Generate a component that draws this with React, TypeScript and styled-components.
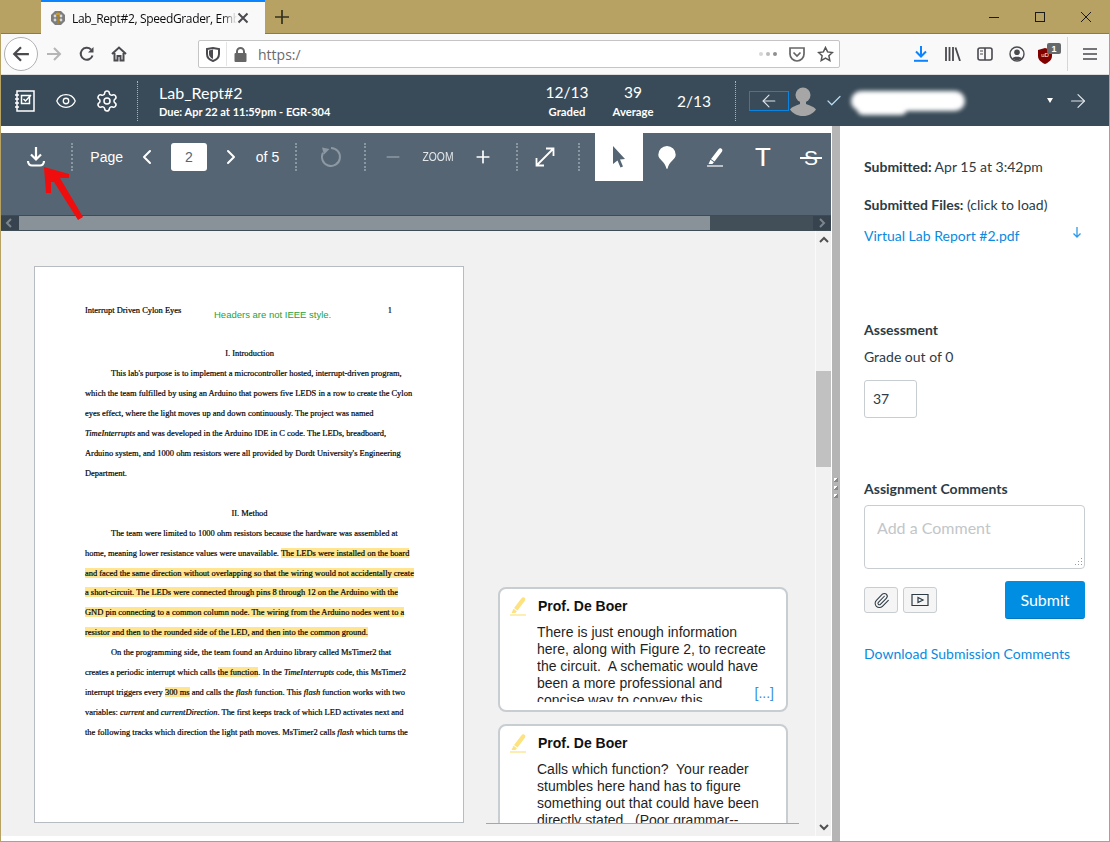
import React from 'react';
import styled, { createGlobalStyle } from 'styled-components';
import { ArrowLeft, ArrowRight, Check, ChevronLeft, ChevronRight, Eye, Minus, Paperclip, Plus, Settings } from 'lucide-react';

const GlobalStyle = createGlobalStyle`
   html, body { margin: 0; padding: 0; background: #fff; }
   * { box-sizing: border-box; }
`;

const Win = styled.div`
   width: 1110px;
   height: 842px;
   overflow: hidden;
   position: relative;
   display: flex;
   flex-direction: column;
   background: #fff;
   border: 1px solid #b8a263;
   border-top: 0;
   font-family: 'Lato', sans-serif;
`;

/* browser chrome */
const TabStrip = styled.div`
   height: 34px;
   flex: none;
   display: flex;
   background: #b8a263;
   border-bottom: 1px solid #8d7a45;
   padding-left: 40px;
`;
const Tab = styled.div`
   width: 224px;
   height: 34px;
   background: #f9f9fa;
   border-top: 2px solid #0a84ff;
   display: flex;
   align-items: center;
   padding-left: 9px;
   font: 12px 'Open Sans', sans-serif;
   letter-spacing: -0.35px;
   color: #0c0c0d;
`;
const TabTitle = styled.span`
   width: 165px;
   margin-left: 6px;
   white-space: nowrap;
   overflow: hidden;
   -webkit-mask-image: linear-gradient(to right, #000 150px, transparent 165px);
   mask-image: linear-gradient(to right, #000 150px, transparent 165px);
`;
const NewTab = styled.div`
   width: 34px;
   height: 33px;
   display: flex;
   align-items: center;
   justify-content: center;
`;
const WinButtons = styled.div`
   margin-left: auto;
   display: flex;
   height: 33px;
`;
const WinButton = styled.div`
   width: 46px;
   display: flex;
   align-items: center;
   justify-content: center;
`;
const NavBar = styled.div`
   height: 41px;
   flex: none;
   display: flex;
   align-items: center;
   background: #f9f9fa;
   border-bottom: 1px solid #dcdcdc;
   padding-left: 3px;
`;
const BackCircle = styled.div`
   width: 34px;
   height: 34px;
   border-radius: 50%;
   background: #fff;
   border: 1px solid #b1b1b3;
   display: flex;
   align-items: center;
   justify-content: center;
`;
const NavSlot = styled.div<{ $w?: number; $ml?: number }>`
   width: ${p => p.$w ?? 32}px;
   height: 32px;
   flex: none;
   margin-left: ${p => p.$ml ?? 0}px;
   display: flex;
   align-items: center;
   justify-content: center;
`;
const UrlBar = styled.div`
   width: 642px;
   height: 28px;
   margin: 0 65px 0 63px;
   flex: none;
   display: flex;
   align-items: center;
   background: #fff;
   border: 1px solid #c5c5c6;
   border-radius: 2px;
   padding-left: 7px;
   font: 14px 'Open Sans', sans-serif;
   color: #6b6b6b;
`;
const UrlSep = styled.div`
   width: 1px;
   height: 24px;
   background: #e4e4e4;
   margin: 0 7px 0 6px;
`;
const UrlText = styled.span`
   margin-left: 11px;
   flex: 1;
`;
const ToolbarSep = styled.div`
   width: 1px;
   height: 34px;
   background: #d6d6d7;
   margin: 0 5px 0 2px;
`;

/* speedgrader header */
const Header = styled.div`
   height: 51px;
   flex: none;
   display: flex;
   align-items: center;
   background: #394b58;
   color: #fff;
   padding-left: 4px;
`;
const HeadIcon = styled.div<{ $w: number; $ml?: number }>`
   width: ${p => p.$w}px;
   margin-left: ${p => p.$ml ?? 0}px;
   flex: none;
   display: flex;
   align-items: center;
   justify-content: center;
`;
const HeadDivider = styled.div<{ $l: number }>`
   height: 40px;
   flex: none;
   margin-left: ${p => p.$l}px;
   border-left: 1px dotted #a9b3ba;
`;
const TitleBlock = styled.div`
   width: 378px;
   margin-left: 21px;
   flex: none;
`;
const AssignmentTitle = styled.div`
   font-size: 16px;
   line-height: 21px;
`;
const DueLine = styled.div`
   font-size: 11px;
   font-weight: 700;
   line-height: 16px;
   margin-top: 1px;
`;
const Stat = styled.div<{ $w: number }>`
   width: ${p => p.$w}px;
   flex: none;
   text-align: center;
`;
const StatValue = styled.div`
   font-size: 15.5px;
   line-height: 20px;
`;
const StatLabel = styled.div`
   font-size: 11.3px;
   font-weight: 700;
   line-height: 16px;
   margin-top: 2px;
`;
const PrevStudent = styled.div`
   width: 40px;
   height: 20px;
   margin-left: 13px;
   flex: none;
   border: 1px solid #0a84e0;
   display: flex;
   align-items: center;
   justify-content: center;
`;
const Avatar = styled.svg`
   flex: none;
`;
const NameSmudge = styled.div`
   width: 114px;
   height: 20px;
   flex: none;
   background: #fff;
   border-radius: 10px;
   filter: blur(2px);
   position: relative;
   &::after {
      content: '';
      position: absolute;
      left: 6px;
      top: 12px;
      width: 50px;
      height: 12px;
      border-radius: 6px;
      background: #fff;
   }
`;
const Caret = styled.div`
   width: 0;
   height: 0;
   margin-left: 82px;
   flex: none;
   border-left: 3.5px solid transparent;
   border-right: 3.5px solid transparent;
   border-top: 5px solid #fff;
`;

/* main area */
const Body = styled.div`
   flex: 1;
   min-height: 0;
   display: flex;
`;
const Viewer = styled.div`
   width: 830px;
   flex: none;
   padding-top: 7px;
   display: flex;
   flex-direction: column;
`;
const Toolbar = styled.div`
   height: 82px;
   flex: none;
   background: #566573;
   display: flex;
   align-items: flex-start;
   overflow: hidden;
   color: #fff;
   font-family: 'Liberation Sans', sans-serif;
   font-size: 14px;
`;
const TbItem = styled.div<{ $w: number; $ml?: number; $mr?: number; $end?: boolean }>`
   width: ${p => p.$w}px;
   height: 48px;
   flex: none;
   margin-left: ${p => p.$ml ?? 0}px;
   margin-right: ${p => p.$mr ?? 0}px;
   padding-right: ${p => (p.$end ? 12 : 0)}px;
   display: flex;
   align-items: center;
   justify-content: ${p => (p.$end ? 'flex-end' : 'center')};
`;
const TbDivider = styled.div`
   width: 2px;
   height: 28px;
   margin-top: 10px;
   flex: none;
   border-left: 2px dotted #8a96a0;
`;
const PageInput = styled.div`
   width: 36px;
   height: 28px;
   margin: 10px 0 0 12px;
   flex: none;
   background: #fff;
   border-radius: 3px;
   color: #566573;
   font-size: 14px;
   display: flex;
   align-items: center;
   justify-content: center;
`;
const ZoomLabel = styled.span`
   font-size: 12px;
   transform: scaleX(0.86);
   color: #e4e8eb;
`;
const Tool = styled.div<{ $on?: boolean; $ml?: number }>`
   width: 48px;
   height: 48px;
   flex: none;
   margin-left: ${p => p.$ml ?? 0}px;
   display: flex;
   align-items: center;
   justify-content: center;
   background: ${p => (p.$on ? '#fff' : 'transparent')};
`;
const TextTool = styled.span`
   font-family: 'Liberation Mono', monospace;
   font-size: 28px;
   color: #fff;
   line-height: 1;
   padding-top: 4px;
`;
const StrikeTool = styled.span`
   position: relative;
   font-family: 'Liberation Sans', sans-serif;
   font-size: 21px;
   color: #fff;
   line-height: 1;
   &::after {
      content: '';
      position: absolute;
      left: -4px;
      right: -4px;
      top: 10px;
      height: 2px;
      background: #fff;
   }
`;
const HScroll = styled.div`
   height: 16px;
   flex: none;
   display: flex;
   background: #424f59;
   border-top: 1px solid #3f4b55;
   border-bottom: 1px solid #3f4b55;
`;
const HButton = styled.div`
   width: 18px;
   flex: none;
   background: #37444f;
   display: flex;
   align-items: center;
   justify-content: center;
`;
const HThumb = styled.div`
   width: 691px;
   background: #8a9299;
`;
const HTrack = styled.div`
   flex: 1;
`;
const DocRow = styled.div`
   height: 605px;
   flex: none;
   display: flex;
   background: #f1f1f1;
`;
const DocPane = styled.div`
   width: 814px;
   flex: none;
   display: flex;
`;
const PageCol = styled.div`
   padding: 35px 0 0 33px;
   flex: none;
`;
const PaperSheet = styled.div`
   width: 430px;
   height: 557px;
   background: #fff;
   border: 1px solid #b7bcc2;
   padding: 33px 0 0 50px;
   position: relative;
   font-family: 'Liberation Serif', serif;
   font-size: 8.45px;
   color: #000;
   -webkit-text-stroke: 0.2px #000;
`;
const HeadLine = styled.div`
   display: flex;
   width: 307px;
   justify-content: space-between;
   line-height: 20px;
   margin-bottom: 24px;
`;
const Line = styled.div<{ $indent?: boolean; $center?: boolean; $gap?: boolean }>`
   line-height: 19.95px;
   white-space: nowrap;
   padding-left: ${p => (p.$indent ? 26 : 0)}px;
   width: ${p => (p.$center ? '329px' : 'auto')};
   text-align: ${p => (p.$center ? 'center' : 'left')};
   margin-bottom: ${p => (p.$gap ? 20 : 0)}px;
`;
const Hl = styled.span`
   background: #ffe58f;
`;
const GreenNote = styled.div`
   position: absolute;
   left: 179px;
   top: 42px;
   font: 9.5px 'Liberation Sans', sans-serif;
   color: #22a33c;
   -webkit-text-stroke: 0;
`;
const CommentCol = styled.div`
   width: 313px;
   height: 593px;
   margin-left: 22px;
   flex: none;
   padding: 356px 11px 0 12px;
   overflow: hidden;
   border-bottom: 1px solid #a3a7aa;
`;
const Card = styled.div`
   width: 290px;
   height: 125px;
   margin-bottom: 12px;
   flex: none;
   padding: 9px 12px 8px 9px;
   background: #fff;
   border: 2px solid #c7cdd1;
   border-radius: 8px;
   position: relative;
   font-family: 'Liberation Sans', sans-serif;
   color: #1f1f1f;
`;
const CardHead = styled.div`
   display: flex;
   align-items: center;
   height: 16px;
   font-size: 14px;
   font-weight: 700;
   gap: 11px;
   color: #111;
`;
const CardBody = styled.div`
   width: 235px;
   height: 78px;
   margin: 10px 0 0 28px;
   overflow: hidden;
   font-size: 14px;
   line-height: 17px;
   white-space: pre-wrap;
`;
const More = styled.span`
   position: absolute;
   right: 12px;
   bottom: 9px;
   font-size: 14px;
   color: #3a8fdc;
`;
const VScroll = styled.div`
   width: 16px;
   flex: none;
   background: #f1f1f1;
   border-left: 1px solid #fafafa;
   display: flex;
   flex-direction: column;
   align-items: center;
`;
const VButton = styled.div`
   height: 18px;
   width: 15px;
   flex: none;
   display: flex;
   align-items: center;
   justify-content: center;
`;
const VThumb = styled.div`
   width: 15px;
   height: 96px;
   margin-top: 122px;
   background: #c1c1c1;
`;
const VFill = styled.div`
   flex: 1;
`;
const Splitter = styled.div`
   width: 8px;
   flex: none;
   background: #b5b5b5;
   display: flex;
   flex-direction: column;
   align-items: center;
   justify-content: center;
   gap: 4px;
   margin-left: 1px;
   padding-top: 8px;
`;
const Grip = styled.i`
   width: 4px;
   height: 4px;
   background: linear-gradient(135deg, #fff 50%, #8a8a8a 50%);
`;

/* right side panel */
const Side = styled.div`
   flex: 1;
   padding: 31px 23px 0 24px;
   font-size: 14px;
   color: #2d3b45;
   line-height: 20px;
`;
const Strong = styled.b`
   font-weight: 700;
`;
const Row = styled.div<{ $mt?: number }>`
   margin-top: ${p => p.$mt ?? 0}px;
`;
const FileRow = styled.div`
   margin-top: 11px;
   display: flex;
   justify-content: space-between;
   align-items: flex-start;
`;
const DownloadGlyph = styled.svg`
   margin-right: 3px;
`;
const LinkText = styled.span`
   color: #0a8ae0;
`;
const GradeBox = styled.div`
   width: 53px;
   height: 38px;
   margin-top: 13px;
   border: 1px solid #c7cdd1;
   border-radius: 3px;
   padding-left: 8px;
   display: flex;
   align-items: center;
`;
const CommentBox = styled.div`
   width: 221px;
   height: 64px;
   margin-top: 6px;
   border: 1px solid #c7cdd1;
   border-radius: 4px;
   padding: 12px 12px;
   color: #c2c6c9;
   font-size: 16px;
   position: relative;
`;
const ResizeGrip = styled.svg`
   position: absolute;
   right: 1px;
   bottom: 1px;
`;
const ActionRow = styled.div`
   width: 221px;
   margin-top: 12px;
   display: flex;
   align-items: flex-start;
   gap: 5px;
`;
const MediaButton = styled.div`
   width: 34px;
   height: 26px;
   margin-top: 6px;
   background: #f5f5f5;
   border: 1px solid #c7cdd1;
   border-radius: 3px;
   display: flex;
   align-items: center;
   justify-content: center;
`;
const Submit = styled.div`
   width: 80px;
   height: 38px;
   margin-left: auto;
   padding-top: 1px;
   background: #008ee2;
   border-bottom: 1px solid #0077c2;
   border-radius: 3px;
   color: #fff;
   font-size: 16px;
   display: flex;
   align-items: center;
   justify-content: center;
`;
const RedArrow = styled.svg`
   position: absolute;
   left: 29px;
   top: 160px;
`;

const Favicon = () => (
   <svg width="16" height="16" viewBox="0 0 16 16">
      <path d="M5 1h6l4 4v6l-4 4H5l-4-4V5z" fill="#7d7d7d" />
      <circle cx="5" cy="6" r="1.4" fill="#d8d8d8" />
      <circle cx="11" cy="6" r="1.4" fill="#d8d8d8" />
      <circle cx="5" cy="10" r="1.4" fill="#d8d8d8" />
      <circle cx="11" cy="10" r="1.4" fill="#d8d8d8" />
      <path d="M7 2h2v12H7z" fill="#a8812f" />
      <path d="M6 3h4v2H6z" fill="#c49a3c" />
   </svg>
);

const GrayLine = { stroke: '#4a4a4f', strokeWidth: 2, fill: 'none' };

const Notebook = () => (
   <svg width="22" height="24" viewBox="0 0 22 24" fill="none" stroke="#fff" strokeWidth="1.5">
      <rect x="3" y="2" width="17" height="20" />
      <path d="M1 6h4M1 10h4M1 14h4M1 18h4" />
      <rect x="7.5" y="6.5" width="8" height="8" />
      <path d="M9.5 10l2 2 5.5-6" />
   </svg>
);

const Highlighter = ({ color }: { color: string }) => (
   <svg width="18" height="20" viewBox="0 0 18 20">
      <path d="M5 12L12.5 2.2c.8-1 2-1.1 3-.4s1.1 1.9.4 3L8.5 14.5z" fill={color} />
      <path d="M4.5 12.8l3.4 2.4-1.5 1.8H2.5z" fill={color} />
      <path d="M1 19h16" stroke={color} strokeWidth="1.2" />
   </svg>
);

const Chevron = ({ dir, color }: { dir: 'l' | 'r' | 'u' | 'd'; color: string }) => {
   const pts = { l: '6,1 2,5 6,9', r: '3,1 7,5 3,9', u: '1,7 5,3 9,7', d: '1,3 5,7 9,3' }[dir];
   return (
      <svg width="10" height="10" viewBox="0 0 10 10">
         <polyline points={pts} fill="none" stroke={color} strokeWidth="2" />
      </svg>
   );
};

const App = () => {
   return (
      <Win>
         <GlobalStyle />
         <TabStrip>
            <Tab>
               <Favicon />
               <TabTitle>Lab_Rept#2, SpeedGrader, Embedded</TabTitle>
               <svg width="12" height="12" viewBox="0 0 12 12">
                  <path d="M1.5 1.5l9 9M10.5 1.5l-9 9" {...GrayLine} />
               </svg>
            </Tab>
            <NewTab>
               <svg width="14" height="14" viewBox="0 0 14 14">
                  <path d="M7 0v14M0 7h14" stroke="#33301f" strokeWidth="1.7" />
               </svg>
            </NewTab>
            <WinButtons>
               <WinButton>
                  <svg width="10" height="10"><path d="M0 5.5h10" stroke="#1a1a1a" /></svg>
               </WinButton>
               <WinButton>
                  <svg width="10" height="10"><rect x=".5" y=".5" width="9" height="9" fill="none" stroke="#1a1a1a" /></svg>
               </WinButton>
               <WinButton>
                  <svg width="10" height="10"><path d="M0 0l10 10M10 0L0 10" stroke="#1a1a1a" /></svg>
               </WinButton>
            </WinButtons>
         </TabStrip>

         <NavBar>
            <BackCircle>
               <svg width="18" height="18" viewBox="0 0 16 16">
                  <path d="M15 8H2M8 2L2 8l6 6" {...GrayLine} />
               </svg>
            </BackCircle>
            <NavSlot>
               <svg width="16" height="16" viewBox="0 0 16 16">
                  <path d="M1 8h13M8 2l6 6-6 6" fill="none" stroke="#b5b5b6" strokeWidth="2" />
               </svg>
            </NavSlot>
            <NavSlot $ml={1}>
               <svg width="16" height="16" viewBox="0 0 16 16">
                  <path d="M13.5 9.5A6 6 0 1 1 12 3.5" {...GrayLine} />
                  <path d="M14.5 1v5.5H9z" fill="#4a4a4f" />
               </svg>
            </NavSlot>
            <NavSlot>
               <svg width="16" height="16" viewBox="0 0 16 16">
                  <path d="M1 8l7-6.5L15 8M3.5 7v7.5h3V10h3v4.5h3V7" {...GrayLine} />
               </svg>
            </NavSlot>
            <UrlBar>
               <svg width="14" height="15" viewBox="0 0 14 15">
                  <path d="M1 2l6-1 6 1v5c0 3.5-3 6-6 7-3-1-6-3.5-6-7z" {...GrayLine} />
                  <path d="M7 2.5V12c-2-1-4-2.5-4-5V3.5z" fill="#4a4a4f" />
               </svg>
               <UrlSep />
               <svg width="13" height="15" viewBox="0 0 13 15">
                  <rect x="0.5" y="6" width="12" height="9" rx="1" fill="#666" />
                  <path d="M3 6.5V4.5a3.5 3.5 0 0 1 7 0v2" fill="none" stroke="#666" strokeWidth="2" />
               </svg>
               <UrlText>https:/</UrlText>
               <svg width="18" height="4" viewBox="0 0 18 4">
                  <circle cx="2" cy="2" r="2" fill="#d7d7d8" />
                  <circle cx="9" cy="2" r="2" fill="#bcbcbd" />
                  <circle cx="16" cy="2" r="2" fill="#8f8f90" />
               </svg>
               <NavSlot $w={28} $ml={6}>
                  <svg width="16" height="15" viewBox="0 0 16 15">
                     <path d="M1 1h14v6a7 7 0 0 1-14 0z" fill="none" stroke="#666" strokeWidth="1.7" />
                     <path d="M4.5 5.5L8 9l3.5-3.5" fill="none" stroke="#666" strokeWidth="1.7" />
                  </svg>
               </NavSlot>
               <NavSlot $w={28}>
                  <svg width="17" height="16" viewBox="0 0 17 16">
                     <path d="M8.5 1.5l2.1 4.4 4.8.6-3.5 3.3.9 4.8-4.3-2.4-4.3 2.4.9-4.8L1.6 6.5l4.800-.6z" fill="none" stroke="#555" strokeWidth="1.5" />
                  </svg>
               </NavSlot>
            </UrlBar>
            <NavSlot>
               <svg width="14" height="16" viewBox="0 0 14 16">
                  <path d="M7 0v10M2 5.5L7 10.5l5-5" fill="none" stroke="#0a84ff" strokeWidth="2" />
                  <path d="M0 14.8h14" stroke="#0a84ff" strokeWidth="2" />
               </svg>
            </NavSlot>
            <NavSlot>
               <svg width="16" height="14" viewBox="0 0 16 14">
                  <path d="M1 0v14M4.5 0v14M8 0v14M10.5.5l4.500 13.500" stroke="#4a4a4f" strokeWidth="1.8" fill="none" />
               </svg>
            </NavSlot>
            <NavSlot>
               <svg width="16" height="14" viewBox="0 0 16 14">
                  <rect x="1" y="1" width="14" height="12" rx="2" {...GrayLine} strokeWidth="1.6" />
                  <path d="M8 1v12" stroke="#4a4a4f" strokeWidth="1.6" />
                  <path d="M3 4h3M3 7h3" stroke="#4a4a4f" />
               </svg>
            </NavSlot>
            <NavSlot>
               <svg width="16" height="16" viewBox="0 0 16 16">
                  <circle cx="8" cy="8" r="7" fill="none" stroke="#4a4a4f" strokeWidth="1.4" />
                  <circle cx="8" cy="6.2" r="2.8" fill="#4a4a4f" />
                  <path d="M3 12.5c1-2.500 9-2.500 10 0-2 2-8 2-10 0z" fill="#4a4a4f" />
               </svg>
            </NavSlot>
            <NavSlot>
               <svg width="24" height="22" viewBox="0 0 24 22">
                  <path d="M1 7l7-2 7 2v6c0 4-3.5 6.500-7 8-3.500-1.500-7-4-7-8z" fill="#800000" />
                  <text x="8" y="14" fontSize="6" fill="#fff" textAnchor="middle" fontFamily="Liberation Sans">uD</text>
                  <rect x="10" y="0" width="14" height="11" rx="2" fill="#66696c" />
                  <text x="17" y="9" fontSize="9" fontWeight="700" fill="#fff" textAnchor="middle" fontFamily="Liberation Sans">1</text>
               </svg>
            </NavSlot>
            <ToolbarSep />
            <NavSlot $w={34}>
               <svg width="14" height="12" viewBox="0 0 14 12">
                  <path d="M0 1h14M0 6h14M0 11h14" stroke="#4a4a4f" strokeWidth="1.7" />
               </svg>
            </NavSlot>
         </NavBar>

         <Header>
            <HeadIcon $w={40}><Notebook /></HeadIcon>
            <HeadIcon $w={42}><Eye size={22} strokeWidth={1.4} color="#fff" /></HeadIcon>
            <HeadIcon $w={40}><Settings size={24} strokeWidth={1.5} color="#fff" /></HeadIcon>
            <HeadDivider $l={10} />
            <TitleBlock>
               <AssignmentTitle>Lab_Rept#2</AssignmentTitle>
               <DueLine>Due: Apr 22 at 11:59pm - EGR-304</DueLine>
            </TitleBlock>
            <Stat $w={60}>
               <StatValue>12/13</StatValue>
               <StatLabel>Graded</StatLabel>
            </Stat>
            <Stat $w={72}>
               <StatValue>39</StatValue>
               <StatLabel>Average</StatLabel>
            </Stat>
            <Stat $w={50}>
               <StatValue>2/13</StatValue>
            </Stat>
            <HeadDivider $l={16} />
            <PrevStudent><ArrowLeft size={20} strokeWidth={1.3} color="#dfe5ea" /></PrevStudent>
            <Avatar width="28" height="30" viewBox="0 0 28 30">
               <circle cx="14" cy="9" r="7.5" fill="#a6a6a6" />
               <path d="M11 15h6v3c3 1.5 8 2.5 10 5.5-3 4-7 6.500-13 6.500S4 27.5 1 23.5c2-3 7-4 10-5.500z" fill="#a6a6a6" />
            </Avatar>
            <HeadIcon $w={34}><Check size={18} strokeWidth={1.6} color="#b9dcf5" /></HeadIcon>
            <NameSmudge />
            <Caret />
            <HeadIcon $w={34} $ml={8}><ArrowRight size={22} strokeWidth={1.3} color="#dfe5ea" /></HeadIcon>
         </Header>

         <Body>
            <Viewer>
               <Toolbar>
                  <TbItem $w={70}>
                     <svg width="20" height="20" viewBox="0 0 20 20" fill="none" stroke="#fff" strokeWidth="2.2">
                        <path d="M10 0v12M5 7.5l5 5 5-5" />
                        <path d="M2 14c0 3 2 4.5 4 4.5h8c2 0 4-1.500 4-4.500" />
                     </svg>
                  </TbItem>
                  <TbDivider />
                  <TbItem $w={62} $end>Page</TbItem>
                  <TbItem $w={24}><ChevronLeft size={26} strokeWidth={2} color="#fff" /></TbItem>
                  <PageInput>2</PageInput>
                  <TbItem $w={24} $ml={12}><ChevronRight size={26} strokeWidth={2} color="#fff" /></TbItem>
                  <TbItem $w={25} $ml={12} $mr={15}>of 5</TbItem>
                  <TbDivider />
                  <TbItem $w={67}>
                     <svg width="24" height="24" viewBox="0 0 24 24" fill="none" stroke="#8d98a2" strokeWidth="2">
                        <path d="M12 3a9 9 0 1 1-8 4.8" />
                        <path d="M3 2.5l7.5 1.5-5.500 5.500z" fill="#8d98a2" stroke="none" />
                     </svg>
                  </TbItem>
                  <TbDivider />
                  <TbItem $w={54}><Minus size={20} strokeWidth={1.7} color="#8d98a2" /></TbItem>
                  <TbItem $w={35}><ZoomLabel>ZOOM</ZoomLabel></TbItem>
                  <TbItem $w={56} $mr={5}><Plus size={20} strokeWidth={2} color="#fff" /></TbItem>
                  <TbDivider />
                  <TbItem $w={54} $mr={6}>
                     <svg width="20" height="20" viewBox="0 0 20 20" fill="none" stroke="#fff" strokeWidth="1.8">
                        <path d="M2 18L18 2M11 1.5h7.5V9M1.5 11v7.5H9" />
                     </svg>
                  </TbItem>
                  <TbDivider />
                  <Tool $on $ml={15}>
                     <svg width="14" height="22" viewBox="0 0 14 22">
                        <path d="M1 0l12 13-5 .5 3 7-2.5 1-3-7L1 18z" fill="#566573" />
                     </svg>
                  </Tool>
                  <Tool>
                     <svg width="18" height="23" viewBox="0 0 18 23">
                        <path d="M9 0a8.7 8.7 0 0 1 8.700 8.700c0 5-6.700 6.300-8.200 14h-1c-1.500-7.700-8.200-9-8.200-14A8.700 8.700 0 0 1 9 0z" fill="#fff" />
                     </svg>
                  </Tool>
                  <Tool><Highlighter color="#fff" /></Tool>
                  <Tool><TextTool>T</TextTool></Tool>
                  <Tool><StrikeTool>S</StrikeTool></Tool>
               </Toolbar>
               <HScroll>
                  <HButton><Chevron dir="l" color="#7c858c" /></HButton>
                  <HThumb />
                  <HTrack />
                  <HButton><Chevron dir="r" color="#7c858c" /></HButton>
               </HScroll>
               <DocRow>
                  <DocPane>
                     <PageCol>
                        <PaperSheet>
                           <HeadLine>
                              <span>Interrupt Driven Cylon Eyes</span>
                              <span>1</span>
                           </HeadLine>
                           <GreenNote>Headers are not IEEE style.</GreenNote>
                           <Line $center>I. Introduction</Line>
                           <Line $indent>This lab's purpose is to implement a microcontroller hosted, interrupt-driven program,</Line>
                           <Line>which the team fulfilled by using an Arduino that powers five LEDS in a row to create the Cylon</Line>
                           <Line>eyes effect, where the light moves up and down continuously. The project was named</Line>
                           <Line><i>TimeInterrupts</i> and was developed in the Arduino IDE in C code. The LEDs, breadboard,</Line>
                           <Line>Arduino system, and 1000 ohm resistors were all provided by Dordt University's Engineering</Line>
                           <Line $gap>Department.</Line>
                           <Line $center>II. Method</Line>
                           <Line $indent>The team were limited to 1000 ohm resistors because the hardware was assembled at</Line>
                           <Line>home, meaning lower resistance values were unavailable. <Hl>The LEDs were installed on the board</Hl></Line>
                           <Line><Hl>and faced the same direction without overlapping so that the wiring would not accidentally create</Hl></Line>
                           <Line><Hl>a short-circuit. The LEDs were connected through pins 8 through 12 on the Arduino with the</Hl></Line>
                           <Line><Hl>GND pin connecting to a common column node. The wiring from the Arduino nodes went to a</Hl></Line>
                           <Line><Hl>resistor and then to the rounded side of the LED, and then into the common ground.</Hl></Line>
                           <Line $indent>On the programming side, the team found an Arduino library called MsTimer2 that</Line>
                           <Line>creates a periodic interrupt which calls <Hl>the function</Hl>. In the <i>TimeInterrupts</i> code, this MsTimer2</Line>
                           <Line>interrupt triggers every <Hl>300 ms</Hl> and calls the <i>flash</i> function. This <i>flash</i> function works with two</Line>
                           <Line>variables: <i>current</i> and <i>currentDirection</i>. The first keeps track of which LED activates next and</Line>
                           <Line>the following tracks which direction the light path moves. MsTimer2 calls <i>flash</i> which turns the</Line>
                        </PaperSheet>
                     </PageCol>
                     <CommentCol>
                        <Card>
                           <CardHead><Highlighter color="#fde27f" />Prof. De Boer</CardHead>
                           <CardBody>{'There is just enough information here, along with Figure 2, to recreate the circuit.  A schematic would have been a more professional and concise way to convey this'}</CardBody>
                           <More>[...]</More>
                        </Card>
                        <Card>
                           <CardHead><Highlighter color="#fde27f" />Prof. De Boer</CardHead>
                           <CardBody>{'Calls which function?  Your reader stumbles here hand has to figure something out that could have been directly stated.  (Poor grammar--'}</CardBody>
                        </Card>
                     </CommentCol>
                  </DocPane>
                  <VScroll>
                     <VButton><Chevron dir="u" color="#505050" /></VButton>
                     <VThumb />
                     <VFill />
                     <VButton><Chevron dir="d" color="#505050" /></VButton>
                  </VScroll>
               </DocRow>
            </Viewer>
            <Splitter>
               <Grip />
               <Grip />
               <Grip />
            </Splitter>
            <Side>
               <Row><Strong>Submitted:</Strong> Apr 15 at 3:42pm</Row>
               <Row $mt={18}><Strong>Submitted Files:</Strong> (click to load)</Row>
               <FileRow>
                  <LinkText>Virtual Lab Report #2.pdf</LinkText>
                  <DownloadGlyph width="12" height="14" viewBox="0 0 12 14">
                     <path d="M6 1v10M2.5 7.5L6 11l3.500-3.500" fill="none" stroke="#2a9bea" strokeWidth="1.3" />
                  </DownloadGlyph>
               </FileRow>
               <Row $mt={74}><Strong>Assessment</Strong></Row>
               <Row $mt={7}>Grade out of 0</Row>
               <GradeBox>37</GradeBox>
               <Row $mt={61}><Strong>Assignment Comments</Strong></Row>
               <CommentBox>
                  Add a Comment
                  <ResizeGrip width="10" height="10" viewBox="0 0 10 10">
                     <path d="M8 1h1v1H8zM5 4h1v1H5zM8 4h1v1H8zM2 7h1v1H2zM5 7h1v1H5zM8 7h1v1H8z" fill="#9a9a9a" />
                  </ResizeGrip>
               </CommentBox>
               <ActionRow>
                  <MediaButton><Paperclip size={17} strokeWidth={1.5} color="#2d3b45" /></MediaButton>
                  <MediaButton>
                     <svg width="18" height="14" viewBox="0 0 18 14" fill="none" stroke="#2d3b45" strokeWidth="1.2">
                        <path d="M1 1.5l16 0v11l-16 0z" />
                        <path d="M7 4.5l5 2.5-5 2.500z" />
                     </svg>
                  </MediaButton>
                  <Submit>Submit</Submit>
               </ActionRow>
               <Row $mt={25}><LinkText>Download Submission Comments</LinkText></Row>
            </Side>
         </Body>

         <RedArrow width="60" height="66" viewBox="0 0 60 66">
            <path d="M14 7L39 14L39 18L30 18L53 57L48 60L24 22L21 22L21 33L16 33Z" fill="#f00d0d" />
         </RedArrow>
      </Win>
   );
};

export default App;
